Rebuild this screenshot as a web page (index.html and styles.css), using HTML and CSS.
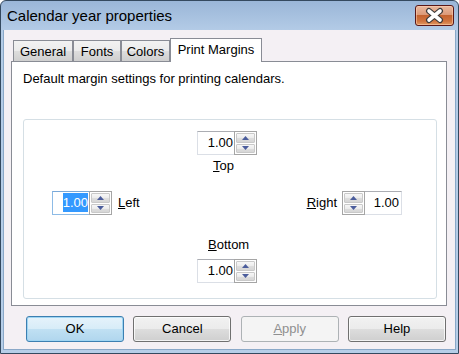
FILE: index.html
```html
<!DOCTYPE html>
<html>
<head>
<meta charset="utf-8">
<link rel="stylesheet" href="styles.css">
</head>
<body>
<div class="window">
  <div class="titlebar">
    <span class="title">Calendar year properties</span>
    <div class="close">
      <svg width="39" height="21" viewBox="0 0 39 21">
        <path d="M14 6 L25 15 M25 6 L14 15" stroke="#3a3a3a" stroke-width="6" stroke-linecap="round" fill="none"/>
        <path d="M14 6 L25 15 M25 6 L14 15" stroke="#ffffff" stroke-width="3.6" stroke-linecap="round" fill="none"/>
      </svg>
    </div>
  </div>
  <div class="client">
    <div class="tabs">
      <div class="tab t-general">General</div>
      <div class="tab t-fonts">Fonts</div>
      <div class="tab t-colors">Colors</div>
      <div class="tab active">Print Margins</div>
    </div>
    <div class="panel">
      <p class="desc">Default margin settings for printing calendars.</p>
      <div class="group">
        <div class="row center-spin">
          <div class="spin">
            <div class="val">1.00</div>
            <div class="btns">
              <div class="sb up"><svg width="7" height="4"><polygon points="0,4 3.5,0 7,4" fill="#4b5d9c"/></svg></div>
              <div class="sb down"><svg width="7" height="4"><polygon points="0,0 7,0 3.5,4" fill="#4b5d9c"/></svg></div>
            </div>
          </div>
        </div>
        <div class="lbl lbl-top"><u>T</u>op</div>
        <div class="row mid">
          <div class="side">
            <div class="spin focused">
              <div class="val"><span class="sel">1.00</span></div>
              <div class="btns">
                <div class="sb up"><svg width="7" height="4"><polygon points="0,4 3.5,0 7,4" fill="#4b5d9c"/></svg></div>
                <div class="sb down"><svg width="7" height="4"><polygon points="0,0 7,0 3.5,4" fill="#4b5d9c"/></svg></div>
              </div>
            </div>
            <span class="side-lbl"><u>L</u>eft</span>
          </div>
          <div class="side right">
            <span class="side-lbl"><u>R</u>ight</span>
            <div class="spin rev">
              <div class="btns">
                <div class="sb up"><svg width="7" height="4"><polygon points="0,4 3.5,0 7,4" fill="#4b5d9c"/></svg></div>
                <div class="sb down"><svg width="7" height="4"><polygon points="0,0 7,0 3.5,4" fill="#4b5d9c"/></svg></div>
              </div>
              <div class="val">1.00</div>
            </div>
          </div>
        </div>
        <div class="lbl lbl-bottom"><u>B</u>ottom</div>
        <div class="row center-spin bottom-spin">
          <div class="spin">
            <div class="val">1.00</div>
            <div class="btns">
              <div class="sb up"><svg width="7" height="4"><polygon points="0,4 3.5,0 7,4" fill="#4b5d9c"/></svg></div>
              <div class="sb down"><svg width="7" height="4"><polygon points="0,0 7,0 3.5,4" fill="#4b5d9c"/></svg></div>
            </div>
          </div>
        </div>
      </div>
    </div>
    <div class="buttons">
      <div class="btn default">OK</div>
      <div class="btn">Cancel</div>
      <div class="btn disabled"><u>A</u>pply</div>
      <div class="btn">Help</div>
    </div>
  </div>
</div>
</body>
</html>
```

FILE: styles.css
```css
* { box-sizing: border-box; }
html, body { margin: 0; padding: 0; }
body {
  width: 459px;
  height: 354px;
  overflow: hidden;
  font-family: "Liberation Sans", Arial, sans-serif;
  font-size: 13px;
  color: #000;
  background: #fff;
}
.window {
  width: 459px;
  height: 354px;
  border: 1px solid #34495f;
  border-radius: 6px 6px 0 0;
  padding: 0 3px 3px 3px;
  background: linear-gradient(to bottom, #9ab6d8 0px, #b3cbe6 29px, #b6cee8 100%);
  display: flex;
  flex-direction: column;
}
.titlebar {
  height: 29px;
  margin: 0 -3px;
  display: flex;
  align-items: flex-start;
  justify-content: space-between;
}
.title {
  font-size: 15px;
  line-height: 29px;
  padding-left: 6px;
  color: #000;
}
.close {
  width: 39px;
  height: 21px;
  margin-top: 4px;
  margin-right: 4px;
  border: 1px solid #5a1717;
  border-radius: 3px;
  background: linear-gradient(to bottom, #e9b89f 0%, #dc9a78 45%, #c4632f 50%, #d0743f 80%, #e19a62 100%);
  box-shadow: inset 0 0 0 1px rgba(255, 210, 180, 0.55);
  position: relative;
}
.close svg {
  position: absolute;
  left: -1px;
  top: -1px;
}
.client {
  flex: 1;
  background: #f4f0f4;
  border-left: 1px solid #8aa8c8;
  border-right: 1px solid #8aa8c8;
  border-bottom: 1px solid #8aa8c8;
  margin: 0 -1px;
  padding: 8px 0 0 0;
  display: flex;
  flex-direction: column;
}
.tabs {
  display: flex;
  align-items: flex-start;
  height: 24px;
  padding-left: 9px;
  position: relative;
  z-index: 2;
}
.tab {
  height: 21px;
  margin-top: 2px;
  border: 1px solid #898c95;
  border-bottom: none;
  background: linear-gradient(to bottom, #f2f2f2 0%, #ebebeb 50%, #dddddd 51%, #cfcfcf 100%);
  text-align: center;
  line-height: 22px;
  font-size: 13px;
}
.t-general { width: 60px; }
.t-fonts { width: 48px; margin-left: 0; }
.t-colors { width: 49px; }
.tab.active {
  width: 92px;
  height: 24px;
  margin-top: 0;
  background: #fff;
  line-height: 22px;
}
.panel {
  margin-left: 7px;
  margin-top: -1px;
  width: 436px;
  height: 245px;
  border: 1px solid #898c95;
  background: #fff;
  padding: 9px 0 0 11px;
  position: relative;
  z-index: 1;
}
.desc {
  margin: 0;
  line-height: 16px;
}
.group {
  margin-top: 32px;
  width: 414px;
  height: 180px;
  border: 1px solid #d5dfe5;
  border-radius: 3px;
  padding-top: 11px;
}
.row { display: flex; }
.center-spin { padding-left: 173px; }
.bottom-spin { margin-top: 6px; }
.lbl { line-height: 16px; height: 16px; }
.lbl-top { margin-top: 3px; padding-left: 189px; }
.lbl-bottom { margin-top: 22px; padding-left: 184px; }
.mid {
  margin-top: 17px;
  justify-content: space-between;
  align-items: center;
  padding: 0 34px 0 28px;
}
.side { display: flex; align-items: center; gap: 6px; }
.side.right { gap: 5px; }
.side-lbl { line-height: 16px; }
.spin {
  display: flex;
  width: 60px;
  height: 24px;
}
.spin .val {
  flex: 1;
  border: 1px solid #dbdfe6;
  border-top-color: #abadb3;
  border-right: none;
  background: #fff;
  text-align: right;
  line-height: 21px;
  padding-right: 1px;
}
.spin.rev .val {
  border-right: 1px solid #dbdfe6;
  border-left: none;
  padding-right: 2px;
}
.spin.focused .val {
  border-color: #8dbbe6;
  border-top-color: #7aa9d8;
  padding-right: 1px;
}
.sel {
  display: inline-block;
  background: #3399ff;
  color: #fff;
  line-height: 19px;
  margin-top: 1px;
  vertical-align: top;
}
.btns {
  width: 23px;
  border: 1px solid #a5a5a5;
  background: #fff;
  display: flex;
  flex-direction: column;
  padding: 1px;
  gap: 1px;
}
.sb {
  flex: 1;
  border: 1px solid #c9c9c9;
  border-radius: 1px;
  background: linear-gradient(to bottom, #f7f7f7 0%, #ececec 50%, #dedede 51%, #d6d6d6 100%);
  display: flex;
  align-items: center;
  justify-content: center;
}
.sb svg { display: block; }
.buttons {
  margin-top: 10px;
  margin-left: 22px;
  width: 420px;
  display: flex;
  justify-content: space-between;
}
.btn {
  width: 98px;
  height: 26px;
  border: 1px solid #707070;
  border-radius: 3px;
  background: linear-gradient(to bottom, #f2f2f2 0%, #ebebeb 50%, #dddddd 51%, #cfcfcf 100%);
  box-shadow: inset 0 0 0 1px rgba(255, 255, 255, 0.75);
  text-align: center;
  line-height: 24px;
  font-size: 13px;
}
.btn.default {
  border-color: #3c7fb1;
  background: linear-gradient(to bottom, #e6f3fb 0%, #d7ecf8 50%, #c0e0f3 51%, #b0d6ee 100%);
  box-shadow: inset 0 0 0 1px #9fd5f3;
}
.btn.disabled {
  border-color: #adb2b5;
  background: #f4f4f4;
  box-shadow: none;
  color: #8f8f8f;
}
```
